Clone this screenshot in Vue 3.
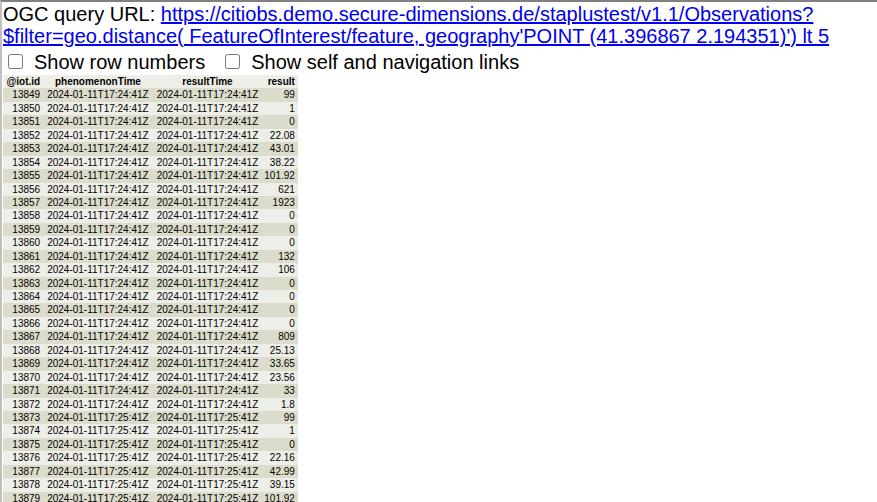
<script setup>
const prefix = ['2024-01-11T17:24:41Z', '2024-01-11T17:25:41Z']
const vals = ['99','1','0','22.08','43.01','38.22','101.92','621','1923','0','0','0','132','106','0','0','0','0','809','25.13','33.65','23.56','33','1.8','99','1','0','22.16','42.99','39.15','101.92']
const rows = vals.map((result, i) => {
  const t = i < 24 ? prefix[0] : prefix[1]
  return { id: 13849 + i, t, result }
})
</script>

<template>
  <div class="page">
    <div class="query">OGC query URL: <a href="#">https://citiobs.demo.secure-dimensions.de/staplustest/v1.1/Observations?$filter=geo.distance( FeatureOfInterest/feature, geography'POINT (41.396867 2.194351)') lt 5</a></div>
    <div class="options">
      <label class="opt"><input type="checkbox" />Show row numbers</label>
      <label class="opt"><input type="checkbox" />Show self and navigation links</label>
    </div>
    <table>
      <thead>
        <tr><th>@iot.id</th><th>phenomenonTime</th><th class="c3">resultTime</th><th class="c4">result</th></tr>
      </thead>
      <tbody>
        <tr v-for="r in rows" :key="r.id">
          <td class="num">{{ r.id }}</td><td>{{ r.t }}</td><td class="c3">{{ r.t }}</td><td class="num c4">{{ r.result }}</td>
        </tr>
      </tbody>
    </table>
  </div>
</template>

<style>
html, body { margin: 0; height: 502px; overflow: hidden; background: #fff; }
</style>

<style scoped>
.page {
  border-top: 2px solid #808080;
  border-left: 2px solid #c0c0c0;
  font-family: "Liberation Sans", Arial, sans-serif;
  font-size: 20px;
  line-height: 22px;
  color: #000;
  height: 500px;
  overflow: hidden;
  padding-left: 1px;
}
.query { width: 860px; padding-top: 1px; }
a { color: #0000ee; text-decoration: underline; }
.options { display: flex; height: 26px; align-items: center; margin-top: 2px; }
.opt { display: flex; align-items: center; margin-right: 15px; }
input { width: 15px; height: 15px; margin: -2px 11px 0 5px; }
table { border-collapse: collapse; font-size: 10px; line-height: 11.43px; background: #eeeee8; }
th { background: #eeeee8; font-weight: 700; padding: 1px 3.5px; }
td { padding: 1px 3.5px; white-space: nowrap; }
th.c3, td.c3 { padding-left: 4.5px; }
th.c4, td.c4 { padding-left: 2.5px; text-align: right; }
tbody tr:nth-child(odd) { background: #dcdccc; }
.num { text-align: right; }
</style>
